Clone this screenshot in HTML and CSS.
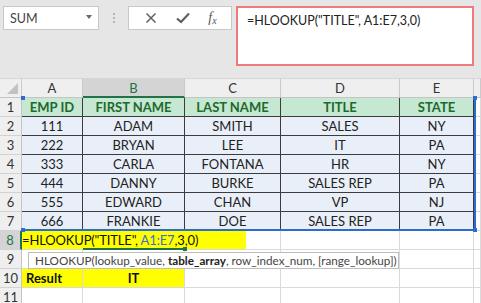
FILE: index.html
```html
<!DOCTYPE html>
<html>
<head>
<meta charset="utf-8">
<link rel="stylesheet" href="styles.css">
</head>
<body>
<div class="app">
  <div class="toolbar">
    <div class="namebox"><span class="nb-text">SUM</span><span class="caret"></span></div>
    <div class="grip"><i></i><i></i><i></i></div>
    <div class="btns">
      <svg class="ico" width="12" height="12" viewBox="0 0 12 12"><path d="M1.5 1.5 L10.5 10.5 M10.5 1.5 L1.5 10.5" stroke="#606060" stroke-width="1.5" fill="none"/></svg>
      <svg class="ico" width="14" height="12" viewBox="0 0 14 12"><path d="M1 6.5 L5 10 L13 1.5" stroke="#606060" stroke-width="2.2" fill="none"/></svg>
      <span class="fx"><i>f</i><i class="fxx">x</i></span>
    </div>
    <div class="formula">=HLOOKUP("TITLE", A1:E7,3,0)</div>
  </div>

  <div class="sheet">
    <div class="h corner"><span class="tri"></span></div>
    <div class="h">A</div>
    <div class="h hsel">B</div>
    <div class="h">C</div>
    <div class="h">D</div>
    <div class="h">E</div>
    <div class="h"></div>

    <div class="rh">1</div>
    <div class="c th">EMP ID</div><div class="c th">FIRST NAME</div><div class="c th">LAST NAME</div><div class="c th">TITLE</div><div class="c th">STATE</div><div class="c"></div>

    <div class="rh">2</div>
    <div class="c td">111</div><div class="c td">ADAM</div><div class="c td">SMITH</div><div class="c td">SALES</div><div class="c td">NY</div><div class="c"></div>

    <div class="rh">3</div>
    <div class="c td">222</div><div class="c td">BRYAN</div><div class="c td">LEE</div><div class="c td">IT</div><div class="c td">PA</div><div class="c"></div>

    <div class="rh">4</div>
    <div class="c td">333</div><div class="c td">CARLA</div><div class="c td">FONTANA</div><div class="c td">HR</div><div class="c td">NY</div><div class="c"></div>

    <div class="rh">5</div>
    <div class="c td">444</div><div class="c td">DANNY</div><div class="c td">BURKE</div><div class="c td">SALES REP</div><div class="c td">PA</div><div class="c"></div>

    <div class="rh">6</div>
    <div class="c td">555</div><div class="c td">EDWARD</div><div class="c td">CHAN</div><div class="c td">VP</div><div class="c td">NJ</div><div class="c"></div>

    <div class="rh">7</div>
    <div class="c td">666</div><div class="c td">FRANKIE</div><div class="c td">DOE</div><div class="c td">SALES REP</div><div class="c td">PA</div><div class="c"></div>

    <div class="rh rsel">8</div>
    <div class="c edit"><span class="editbox">=HLOOKUP("TITLE", <span class="ref">A1:E7</span>,3,0)</span></div>
    <div class="c"></div><div class="c"></div><div class="c"></div>

    <div class="rh">9</div>
    <div class="c"></div><div class="c"></div><div class="c"></div><div class="c"></div><div class="c"></div><div class="c"></div>

    <div class="rh">10</div>
    <div class="c y left">Result</div><div class="c y bold">IT</div><div class="c"></div><div class="c"></div><div class="c"></div><div class="c"></div>

    <div class="rh">11</div>
    <div class="c"></div><div class="c"></div><div class="c"></div><div class="c"></div><div class="c"></div><div class="c"></div>

    <div class="selbox"></div>
    <span class="hd hd1"></span><span class="hd hd2"></span><span class="hd hd3"></span><span class="hd hd4"></span>
    <div class="active"></div>
    <span class="ahd"></span>
    <div class="tip">HLOOKUP(lookup_value, <b>table_array</b>, row_index_num, [range_lookup])</div>
  </div>
</div>
</body>
</html>
```

FILE: styles.css
```css
html, body {
  margin: 0;
  padding: 0;
}
body {
  background: #e6e6e6;
  font-family: "Lato", "Liberation Sans", sans-serif;
  width: 481px;
  height: 303px;
  overflow: hidden;
}
.app {
  display: flex;
  flex-direction: column;
}
.toolbar {
  height: 78px;
  display: flex;
  align-items: flex-start;
  padding-top: 6px;
  box-sizing: border-box;
  background: #e6e6e6;
}
.namebox {
  margin-left: 3px;
  width: 96px;
  height: 24px;
  box-sizing: border-box;
  background: #fff;
  border: 1px solid #c8c8c8;
  display: flex;
  align-items: center;
  justify-content: space-between;
  padding: 0 6px 0 6px;
  font-size: 12.5px;
  color: #444;
}
.caret {
  width: 0;
  height: 0;
  border-left: 3.5px solid transparent;
  border-right: 3.5px solid transparent;
  border-top: 4px solid #6a6a6a;
  margin-top: -2px;
}
.grip {
  width: 29px;
  height: 24px;
  display: flex;
  flex-direction: column;
  align-items: center;
  justify-content: center;
  gap: 2px;
}
.grip i {
  width: 2px;
  height: 2px;
  background: #b4b4b4;
}
.btns {
  width: 104px;
  height: 24px;
  box-sizing: border-box;
  background: #fff;
  border: 1px solid #c8c8c8;
  display: flex;
  align-items: center;
  justify-content: space-around;
  padding: 0 5px 0 7px;
}
.fx {
  font-family: "Liberation Serif", serif;
  font-style: italic;
  font-size: 14px;
  color: #555;
  line-height: 1;
}
.fx i {
  font-style: italic;
}
.fxx {
  font-size: 10px;
  position: relative;
  top: 2px;
}
.formula {
  margin-left: 4px;
  width: 238px;
  height: 60px;
  box-sizing: border-box;
  background: #fff;
  border: 2px solid #ee7b7b;
  padding: 5px 0 0 9px;
  font-size: 12.5px;
  color: #222;
}

.sheet {
  position: relative;
  display: grid;
  grid-template-columns: 22px 61px 102px 96px 119px 74px 7px;
  grid-template-rows: 20px repeat(11, 19px);
  background: #fff;
  font-size: 13px;
}
.h {
  background: #efefef;
  border-top: 1px solid #d6d6d6;
  border-right: 1px solid #cacaca;
  border-bottom: 1px solid #c4c4c4;
  box-sizing: border-box;
  display: flex;
  align-items: center;
  justify-content: center;
  color: #333;
}
.corner {
  position: relative;
  background: #efefef;
}
.tri {
  position: absolute;
  right: 3px;
  bottom: 3px;
  width: 0;
  height: 0;
  border-left: 11px solid transparent;
  border-bottom: 11px solid #c2c2c2;
}
.hsel {
  background: #d4d4d4;
  color: #217346;
  border-bottom: 2px solid #217346;
}
.rh {
  background: #efefef;
  border-right: 1px solid #c4c4c4;
  border-bottom: 1px solid #d2d2d2;
  box-sizing: border-box;
  display: flex;
  align-items: center;
  justify-content: center;
  color: #333;
  font-size: 13px;
}
.rsel {
  background: #d4d4d4;
  color: #217346;
  border-right: 2px solid #217346;
}
.c {
  border-right: 1px solid #dadada;
  border-bottom: 1px solid #dadada;
  box-sizing: border-box;
  display: flex;
  align-items: center;
  justify-content: center;
  color: #222;
  white-space: nowrap;
}
.th {
  background: #c6e7d1;
  color: #1d6a2e;
  font-weight: bold;
  border-right: 1px solid #3c3c3c;
  border-bottom: 1px solid #3c3c3c;
}
.td {
  background: #e9eff8;
  border-right: 1px solid #3c3c3c;
  border-bottom: 1px solid #3c3c3c;
}
.edit {
  grid-column: 2 / 5;
  justify-content: flex-start;
  align-items: stretch;
  overflow: visible;
}
.editbox {
  display: block;
  width: 224px;
  background: #ffff00;
  line-height: 18px;
  color: #111;
  font-size: 13px;
  letter-spacing: -0.15px;
  white-space: pre;
}
.ref {
  color: #3a6fcf;
}
.y {
  background: #ffff00;
  font-weight: bold;
  color: #111;
}
.left {
  justify-content: flex-start;
  padding-left: 4px;
}
.selbox {
  position: absolute;
  left: 22px;
  top: 20px;
  width: 454px;
  height: 133px;
  box-sizing: border-box;
  border-right: 2px solid #2e6bd0;
  border-bottom: 2px solid #2e6bd0;
  pointer-events: none;
}
.hd {
  position: absolute;
  width: 4px;
  height: 4px;
  background: #2e6bd0;
}
.hd1 { left: 21px; top: 18px; }
.hd2 { left: 473px; top: 18px; }
.hd3 { left: 21px; top: 150px; }
.hd4 { left: 473px; top: 150px; }
.active {
  position: absolute;
  left: 83px;
  top: 170px;
  width: 102px;
  height: 2px;
  background: #217346;
}
.ahd {
  position: absolute;
  left: 183px;
  top: 169px;
  width: 4px;
  height: 4px;
  background: #217346;
}
.tip {
  position: absolute;
  left: 28px;
  top: 174px;
  width: 371px;
  height: 17px;
  box-sizing: border-box;
  background: #fff;
  border: 1px solid #bdbdbd;
  font-size: 11.7px;
  line-height: 15px;
  color: #444;
  padding-left: 6px;
  white-space: nowrap;
}
.tip b {
  color: #222;
}
```
